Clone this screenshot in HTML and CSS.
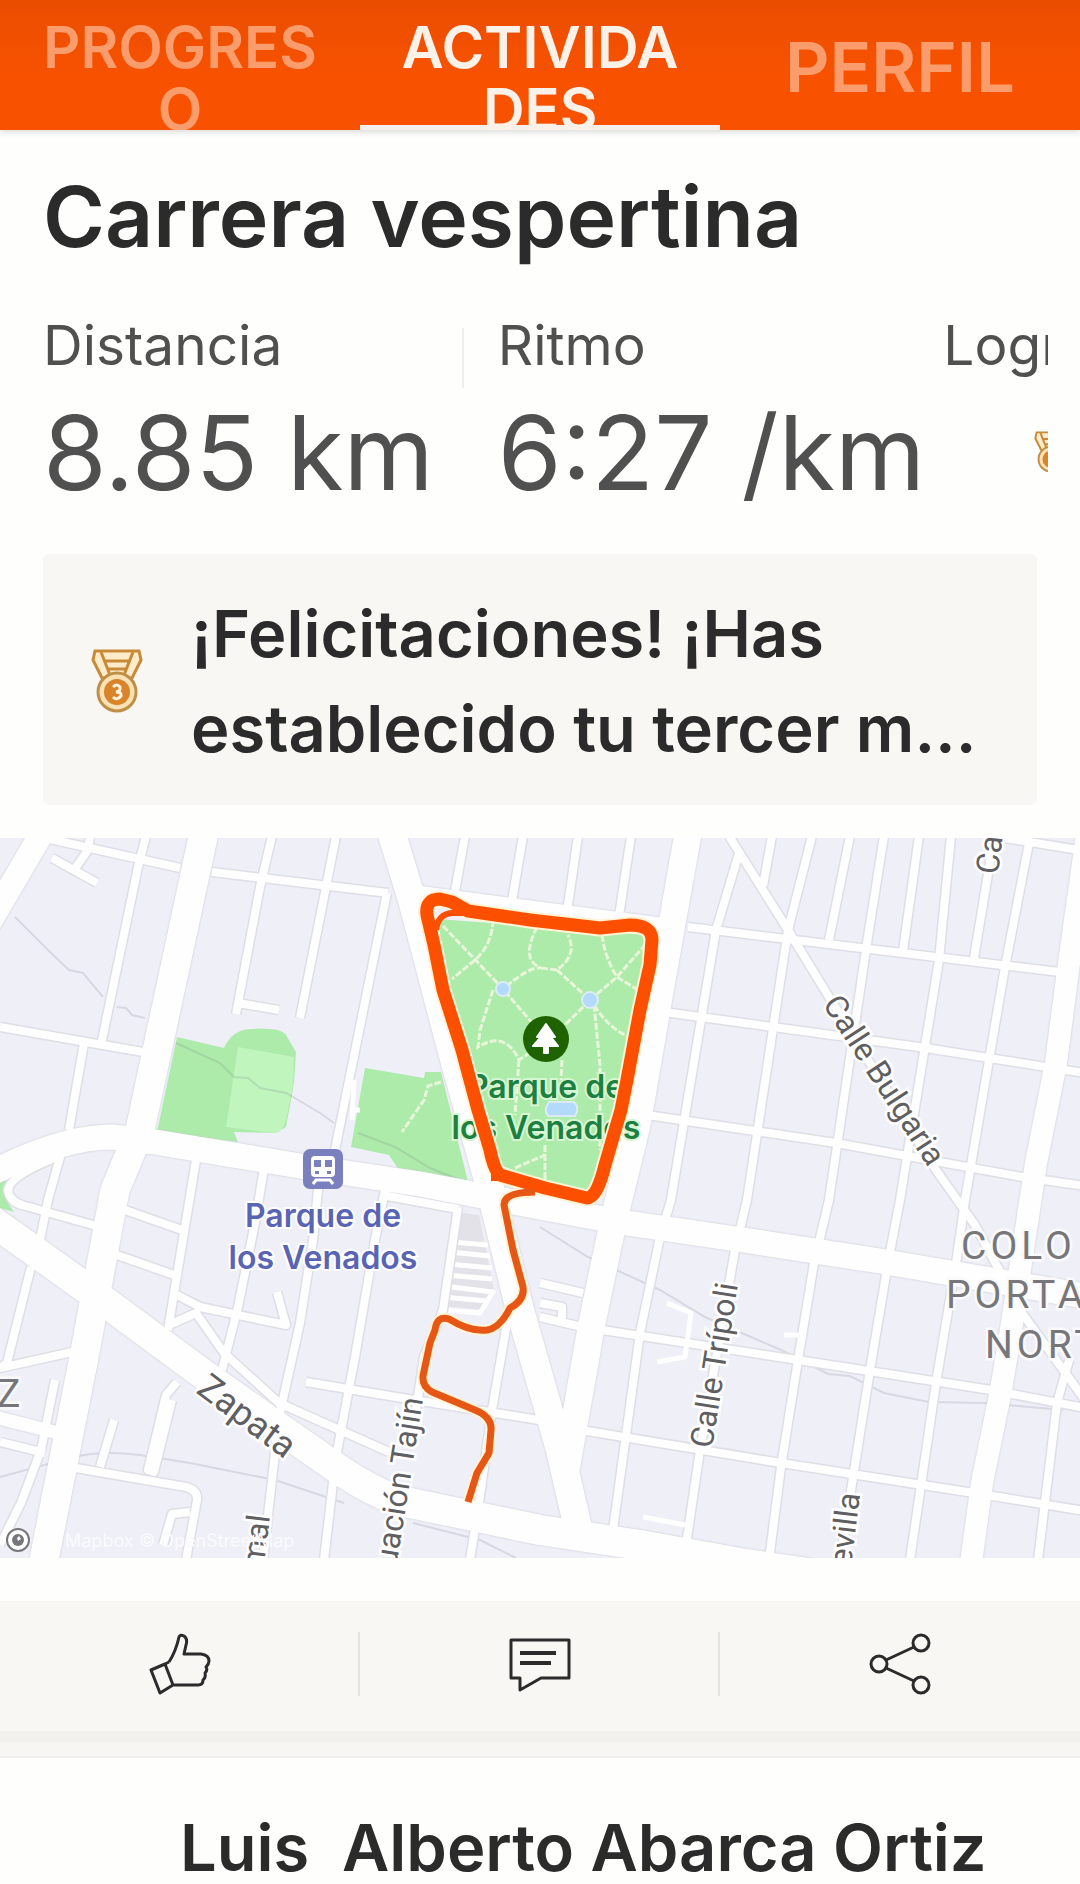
FILE: index.html
```html
<!DOCTYPE html>
<html lang="es">
<head>
  <meta charset="UTF-8" />
  <meta name="viewport" content="width=device-width, initial-scale=1.0" />
  <title>Carrera vespertina</title>
  <link rel="stylesheet" href="styles.css">
</head>
<body>

<nav class="tabs">
  <a class="tab" href="#progreso">PROGRESO</a>
  <a class="tab active" href="#actividades">ACTIVIDADES</a>
  <a class="tab tab-big" href="#perfil">PERFIL</a>
</nav>

<main class="activity">
  <h1>Carrera vespertina</h1>

  <div class="stats">
    <div class="stat">
      <span class="label">Distancia</span>
      <span class="value">8.85 km</span>
    </div>
    <div class="divider"></div>
    <div class="stat">
      <span class="label">Ritmo</span>
      <span class="value">6:27 /km</span>
    </div>
    <div class="stat stat-last">
      <span class="label">Logros</span>
      <svg class="medal-small" viewBox="0 0 52 66"><use href="#medal" /></svg>
    </div>
  </div>

  <div class="achievement">
    <svg class="medal" viewBox="0 0 52 66">
      <g id="medal">
        <path d="M4 3 H48 L50 12 L41 30 H11 L2 12 Z" fill="#fdeccb" stroke="#c98a38" stroke-width="3" />
        <path d="M10 4 L19 27 M42 4 L33 27 M13 13 H39 M16 21 H36" fill="none" stroke="#c98a38" stroke-width="3" />
        <circle cx="26" cy="44" r="19" fill="#fbe2b4" stroke="#bf8f48" stroke-width="3" />
        <circle cx="26" cy="44" r="13" fill="#d9832b" />
        <path d="M22 39 Q26 35 29 39 Q30 43 25 44 Q31 44 30 48 Q26 53 22 49" fill="none" stroke="#fff3dc" stroke-width="3" />
      </g>
    </svg>
    <p>¡Felicitaciones! ¡Has establecido tu tercer m...</p>
  </div>
</main>

<!-- mapa del recorrido -->
<svg class="map" viewBox="0 838 1080 720" role="img" aria-label="Mapa del recorrido">
  <defs>
    <g id="streets">
      <path d="M45 838 L180 868 M212 872 L388 893 M146 836 L138 867 L101 1045 M90 836 L88 850 L74 870 M52 858 L97 883" />
      <path d="M0 1027 L143 1052 M84 1043 L69 1130 M62 1150 L48 1200 L40 1240 M62 1155 Q10 1175 8 1190 Q10 1202 22 1205 L100 1227 M125 1210 L182 1230" />
      <path d="M272 836 L260 887 L236 1014 M238 1003 L279 1010 M336 836 L326 887 L300 1018 M387 893 L335 1150 M465 836 L453 902 M523 836 L511 907 M578 836 L567 912 M631 836 L619 916" />
      <path d="M740 850 L716 930 L671 1200 L660 1237 L640 1333 L613 1530 M729 836 L788 930 L829 997 L936 1170 L975 1225 L1022 1313 L1085 1400" />
      <path d="M772 836 L763 886 M812 836 L788 930 L747 1200 L735 1250 L700 1450 L686 1545 M850 836 L829 940 M884 836 L867 943 L829 1200 L814 1263 L798 1360 L781 1467 L769 1560" />
      <path d="M919 836 L903 951 M951 836 L939 960 L900 1200 L889 1257 L870 1370 L840 1560 M992 850 L974 958 M1029 843 L1005 967 L965 1200 L957 1257 L936 1383 L910 1560 M1070 1357 L1057 1403 L1038 1560" />
      <path d="M688 927 L1060 972 M664 1012 L919 1047 L1085 1073 M647 1115 L836 1143 L1022 1177 L1085 1186 M602 1330 L798 1360 L991 1390 L1085 1408 M581 1430 L781 1463 L974 1493 L1085 1511 M1005 838 L1085 851" />
      <path d="M196 1160 L168 1330 M264 1168 L255 1223 L238 1307 L222 1370 M117 1255 L174 1275 M177 1295 L200 1307 L286 1325 L277 1292 M169 1325 L196 1313 L224 1353 L279 1403 L389 1452" />
      <path d="M320 1170 L313 1240 L300 1323 L279 1417 L263 1560 M385 1190 L375 1240 L355 1357 L336 1457 L324 1560 M458 1207 L443 1310 L424 1357 L416 1410 M306 1382 L396 1397 L545 1421 M508 1317 L492 1410 L479 1503 L470 1560 M382 1195 L458 1209" />
      <path d="M31 1267 L7 1363 L0 1368 L72 1352 M0 1442 L45 1453 M55 1380 L41 1450 L21 1503 L0 1545 M114 1420 L100 1467 M70 1467 L186 1487 Q198 1490 197 1500 L186 1560 M190 1512 L172 1514 L163 1545" />
      <path d="M177 1382 L166 1395 L148 1470 L154 1472 L172 1400" />
      <path d="M540 1283 L583 1293 M540 1303 L562 1307 L562 1322 M540 1317 L582 1327" />
    </g>
    <g id="lanes">
      <path d="M667 1303 L691 1313 L685 1357 L657 1362 M784 1335 L802 1335 M643 1517 L685 1525 M354 1080 L352 1120 M354 1110 L360 1110" />
    </g>
    <g id="avenues">
      <path d="M46 826 L-12 925" stroke-width="24" />
      <path d="M205 828 L140 1130 L115 1190 L84 1357 L42 1570" stroke-width="29" />
      <path d="M390 828 L412 900 L455 1063 L488 1180 L520 1310 L560 1450 L582 1545" stroke-width="28" />
      <path d="M689 828 L659 997 L637 1125 L613 1223 L592 1323 L566 1470" stroke-width="27" />
      <path d="M420 893 L664 925" stroke-width="14" />
      <path d="M-12 1175 Q60 1137 112 1137 L155 1142 L300 1166 L420 1184 L540 1207 L620 1222 L750 1241 L880 1261 L1090 1297" stroke-width="25" />
      <path d="M-12 1218 L93 1293 L207 1377 L275 1425 L344 1473 Q370 1490 396 1500 L540 1530 L640 1545 L740 1563 L820 1575" stroke-width="30" />
      <path d="M1088 828 L1069 963 L1056 1063 L1036 1163 L1012 1323 L1001 1390 L982 1483 L970 1570" stroke-width="22" />
      <path d="M-5 1417 L62 1434" stroke-width="13" />
    </g>
  </defs>

  <rect class="land" x="0" y="838" width="1080" height="720" />
  <path class="park" d="M0 1178 L10 1184 L6 1200 L14 1212 L0 1208 Z" />
  <path class="park" d="M177 1037 L224 1048 Q232 1030 250 1029 Q280 1027 286 1035 L296 1052 L294 1083 L286 1127 L275 1133 L234 1132 L238 1142 L157 1132 Z" />
  <path class="pitch" d="M238 1047 L294 1057 L293 1085 L286 1120 Q282 1133 275 1133 L226 1127 Z" />
  <path class="park" d="M365 1068 L424 1078 L425 1072 L441 1072 L468 1182 L399 1170 L389 1155 L351 1147 Z" />

  <g class="creeks">
    <path d="M15 917 L50 952 L69 970 L83 973 L103 997 M117 1007 L126 1008 L132 1015 L145 1018 M176 1043 L220 1063 L234 1077 L248 1078 L260 1088 L286 1093 L310 1107 L320 1113 L334 1123 M358 1133 L395 1147 L430 1168 L465 1182" />
    <path d="M0 1477 L70 1458 Q100 1450 140 1455 L190 1463 L275 1480 L344 1503 M413 1523 L480 1540 L516 1558 M540 1227 L588 1257 L660 1290 L705 1317 L781 1350 L828 1374 L850 1376 L884 1393 L929 1402 L984 1403 L1063 1410" />
  </g>

  <path class="parking" d="M456 1212 L479 1215 L494 1290 L482 1310 L444 1306 Z" />
  <path class="parking-rows" d="M452 1242 L488 1245 M450 1252 L490 1256 M448 1264 L492 1268 M446 1275 L492 1279 M444 1286 L492 1292 M442 1297 L488 1301 M442 1310 L480 1313 L494 1290" />

  <use href="#avenues" class="casing casing-avenues" />
  <use href="#streets" class="casing" stroke-width="11" />
  <use href="#lanes" class="road" stroke-width="5" />
  <use href="#streets" class="road" stroke-width="8" />
  <use href="#avenues" class="road" />

  <path class="park" d="M438 919 L648 935 L630 1040 L612 1120 L592 1194 L540 1180 L500 1165 L470 1065 L444 985 Z" />
  <g class="paths">
    <path d="M443 926 L503 989 L534 1025 M493 920 Q492 945 475 960 L452 979 M493 990 L480 1030 L478 1047 Q505 1030 519 1060 L534 1050 M519 1060 L515 1115" />
    <path d="M537 927 Q520 960 541 968 Q530 966 503 989 M541 968 L557 970 Q578 955 568 935 M557 970 L590 1000 L565 1025 M590 1000 L617 977 L645 945 M602 935 Q605 958 617 977 L638 990" />
    <path d="M594 1005 L600 1065 L600 1150 M594 1005 Q610 1030 630 1037 M562 1060 L561 1080 M545 1145 L545 1180 M515 1168 L545 1155 M441 1082 L428 1086 L424 1100 L402 1132" />
  </g>
  <g class="water">
    <circle cx="503" cy="989" r="7" />
    <circle cx="590" cy="1000" r="8" />
    <path d="M549 1102 L574 1102 Q580 1108 575 1116 L548 1116 Q543 1110 549 1102 Z" />
  </g>
  <circle cx="546" cy="1039" r="23" fill="#1f6200" />
  <path d="M546 1024 L555 1037 H551 L558 1046 H548 V1053 H544 V1046 H533 L541 1037 H537 Z" fill="#fff" stroke="#fff" stroke-width="2" stroke-linejoin="round" />

  <g class="place park-name">
    <text x="546" y="1098">Parque de</text>
    <text x="546" y="1139">los Venados</text>
  </g>

  <path class="glow" d="M427 915 Q425 899 440 899 L452 902 L468 911 L530 920 L600 928 L630 925 Q652 925 652 940 L650 965 L640 1010 L627 1080 L621 1110 L605 1165 Q597 1198 587 1198 L545 1188 L500 1175 Q494 1170 490 1150 L478 1110 L462 1050 L443 990 L434 945 Z" />
  <path class="glow glow-thin" d="M535 1192 Q504 1192 504 1205 L513 1250 L523 1287 Q525 1300 510 1308 Q500 1328 487 1330 Q470 1332 449 1319 Q437 1315 435 1330 L430 1343 L423 1376 Q422 1386 432 1392 L475 1410 Q492 1417 491 1430 L489 1453 L477 1473 L468 1502" />
  <path class="route" d="M427 915 Q425 899 440 899 L452 902 L468 911 L530 920 L600 928 L630 925 Q652 925 652 940 L650 965 L640 1010 L627 1080 L621 1110 L605 1165 Q597 1198 587 1198 L545 1188 L500 1175 Q494 1170 490 1150 L478 1110 L462 1050 L443 990 L434 945 Z" />
  <path class="route route-inner" d="M436 930 Q438 914 452 913 L480 913 M494 1165 V1181" />
  <path class="route route-tail" d="M535 1192 Q504 1192 504 1205 L513 1250 L523 1287 Q525 1300 510 1308 Q500 1328 487 1330 Q470 1332 449 1319 Q437 1315 435 1330 L430 1343 L423 1376 Q422 1386 432 1392 L475 1410 Q492 1417 491 1430 L489 1453 L477 1473 L468 1502" />

  <rect x="303" y="1149" width="40" height="40" rx="7" fill="#7a80bd" />
  <rect x="311" y="1156" width="24" height="21" rx="4" fill="#fff" />
  <path d="M314 1160 H321 V1167 H314 Z M325 1160 H332 V1167 H325 Z M315 1171 H319 V1174 H315 Z M327 1171 H331 V1174 H327 Z" fill="#7a80bd" />
  <path d="M313 1184 L316 1180 H330 L333 1184" fill="none" stroke="#fff" stroke-width="3" />
  <g class="place station-name">
    <text x="323" y="1227">Parque de</text>
    <text x="323" y="1269">los Venados</text>
  </g>

  <g class="street-names">
    <text transform="translate(822 1004) rotate(57)">Calle Bulgaria</text>
    <text transform="translate(712 1449) rotate(-81)">Calle Trípoli</text>
    <text transform="translate(998 875) rotate(-83)">Calle</text>
    <text transform="translate(423 1399) rotate(-81)" text-anchor="end">uación Tajín</text>
    <text transform="translate(270 1516) rotate(-83)" text-anchor="end">rmal</text>
    <text transform="translate(860 1494) rotate(-83)" text-anchor="end">Sevilla</text>
    <text class="big" transform="translate(195 1392) rotate(37)">Zapata</text>
  </g>
  <g class="district">
    <text x="961" y="1259">COLO</text>
    <text x="946" y="1308">PORTA</text>
    <text x="985" y="1358">NORT</text>
    <text x="-3" y="1407">Z</text>
  </g>

  <circle cx="18" cy="1540" r="11" fill="#fff" stroke="#77777b" stroke-width="2" />
  <circle cx="18" cy="1540" r="6" fill="#77777b" />
  <path d="M14 1545 L13 1538 M17 1538 L19 1536 L21 1539 L18 1541 Z" fill="#fff" />
  <text class="credit" x="65" y="1547">Mapbox © OpenStreetMap</text>
</svg>

<div class="actions">
  <button class="action" aria-label="Me gusta">
    <svg viewBox="0 0 62 62">
      <path d="M20 29 Q27 18 30 4 Q31 1 35 3 Q39 6 37 12 L35 21 H52 Q60 22 60 28 Q60 31 57 34 Q59 37 56 40 Q57 45 54 47 Q54 52 49 52 H25 M2 37 L16 31 L24 52 L11 60 Z M16 31 L20 29" />
    </svg>
  </button>
  <button class="action" aria-label="Comentar">
    <svg viewBox="0 0 62 62">
      <path d="M2 7 H60 V45 H32 L11 57 V45 H2 Z" />
      <path d="M11 20 H47 M11 30 H42" stroke-width="4" />
    </svg>
  </button>
  <button class="action" aria-label="Compartir">
    <svg viewBox="0 0 62 62">
      <circle cx="10" cy="31" r="8" />
      <circle cx="52" cy="10" r="8" />
      <circle cx="52" cy="52" r="8" />
      <path d="M17 27 L45 14 M17 35 L45 48" />
    </svg>
  </button>
</div>
<div class="feed-gap"></div>

<article class="next-post">
  <h2>Luis&nbsp; Alberto Abarca Ortiz</h2>
</article>

</body>
</html>
```
FILE: styles.css
```css
body {
  margin: 0;
  background-color: #fefefd;
  font-family: Inter, "Liberation Sans", sans-serif;
  color: #2b2b2b;
}
h1, h2, p {
  margin: 0;
  font-weight: 600;
}

/* tabs */
.tabs {
  display: flex;
  height: 130px;
  overflow: hidden;
  background: linear-gradient(#ea4d00, #f85200 60%);
  box-shadow: 0 2px 6px rgba(0, 0, 0, 0.15);
}
.tab {
  flex: 1;
  box-sizing: border-box;
  height: 130px;
  padding: 16px 36px 0;
  text-align: center;
  text-decoration: none;
  word-break: break-all;
  font-size: 58px;
  line-height: 62px;
  font-weight: 600;
  color: #fb9c6c;
}
.tab.active {
  color: #faf1e8;
  border-bottom: 5px solid #f5f0ec;
}
.tab-big {
  font-size: 69px;
  line-height: 102px;
}

/* activity */
.activity {
  padding: 39px 43px 33px;
}
h1 {
  font-size: 84px;
  line-height: 96px;
}
.stats {
  display: flex;
  margin: 42px -11px 0 0;
  overflow: hidden;
}
.stat {
  flex-shrink: 0;
  display: flex;
  flex-direction: column;
  color: #505050;
}
.divider {
  flex-shrink: 0;
  width: 2px;
  height: 60px;
  margin: 21px 34px 0 28px;
  background-color: #efefef;
}
.stat-last {
  margin-left: 18px;
}
.label {
  font-size: 55px;
  line-height: 76px;
}
.value {
  font-size: 103px;
  line-height: 140px;
}
.medal-small {
  width: 34px;
  height: 44px;
  margin: 47px 0 0 91px;
}
.achievement {
  display: flex;
  align-items: center;
  gap: 48px;
  margin-top: 31px;
  padding: 32px 30px 29px 48px;
  border-radius: 6px;
  background-color: #f8f7f4;
}
.achievement p {
  flex: 1;
  font-size: 65px;
  line-height: 95px;
}
.medal {
  flex-shrink: 0;
  width: 52px;
  height: 66px;
}

/* map */
.map {
  display: block;
  width: 100%;
}
.land {
  fill: #efeff8;
}
.park {
  fill: #aceba9;
}
.pitch {
  fill: #c0f5bd;
}
.creeks path {
  fill: none;
  stroke: rgba(120, 125, 135, 0.2);
  stroke-width: 2;
}
.parking {
  fill: #e2e2e8;
}
.parking-rows {
  fill: none;
  stroke: #fff;
  stroke-width: 5;
}
.casing {
  fill: none;
  stroke: #dedee6;
  stroke-linejoin: round;
}
.casing-avenues {
  filter: drop-shadow(0 0 1px #c8c8d2);
}
.road {
  fill: none;
  stroke: #fefefe;
  stroke-linejoin: round;
}
.paths path {
  fill: none;
  stroke: #e9f5d9;
  stroke-width: 3;
  stroke-dasharray: 7 2;
}
.water {
  fill: #b3dafb;
  stroke: #dcebf5;
  stroke-width: 2;
}
.place text {
  font-size: 32px;
  font-weight: 600;
  text-anchor: middle;
  paint-order: stroke;
  stroke-width: 4px;
}
.park-name text {
  fill: #1c8040;
  stroke: #d9f6d4;
}
.station-name text {
  fill: #5a64b4;
  stroke: #fff;
}
.glow {
  fill: none;
  stroke: #fff3d6;
  stroke-width: 17;
  stroke-linejoin: round;
}
.glow-thin {
  stroke-width: 11;
}
.route {
  fill: none;
  stroke: #fc5000;
  stroke-width: 13;
  stroke-linejoin: round;
}
.route-inner {
  stroke-width: 6;
}
.route-tail {
  stroke: #e65716;
  stroke-width: 7;
}
.street-names text {
  font-family: Roboto, sans-serif;
  font-size: 32px;
  fill: #5f5f63;
  paint-order: stroke;
  stroke: #fff;
  stroke-width: 5px;
}
.street-names .big {
  font-size: 36px;
}
.district text {
  font-family: Roboto, sans-serif;
  font-size: 39px;
  letter-spacing: 4px;
  fill: #77777b;
  paint-order: stroke;
  stroke: #fafafc;
  stroke-width: 5px;
}
.credit {
  font-size: 18px;
  fill: #fafafd;
}

/* actions */
.actions {
  display: flex;
  margin-top: 43px;
  height: 130px;
  background-color: #f8f7f4;
}
.action {
  flex: 1;
  display: flex;
  justify-content: center;
  align-items: center;
  padding: 0 0 4px;
  border: none;
  background: linear-gradient(#e4e4e1, #e4e4e1) right top 31px / 2px 64px no-repeat;
  cursor: pointer;
}
.action:last-child {
  background: none;
}
.action svg {
  width: 62px;
  height: 62px;
  fill: none;
  stroke: #2b2b2b;
  stroke-width: 3;
  stroke-linejoin: round;
}
.feed-gap {
  height: 25px;
  background: linear-gradient(#f2f1ee 10px, #f7f6f2 12px);
  border-bottom: 2px solid #eeede9;
}
.next-post {
  padding: 54px 40px 0 180px;
}
h2 {
  font-size: 65px;
  line-height: 72px;
  white-space: nowrap;
}
```
